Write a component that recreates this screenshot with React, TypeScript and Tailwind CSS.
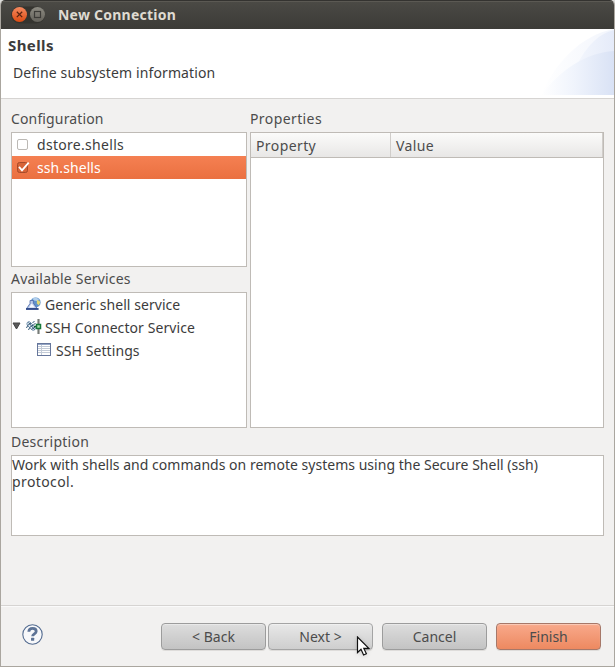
import type { ReactNode } from "react";

function WindowControls() {
  return (
    <svg width="34" height="18" viewBox="0 0 34 18" className="shrink-0">
      <defs>
        <linearGradient id="close" x1="0" y1="0" x2="0" y2="1">
          <stop offset="0" stopColor="#f58a60" />
          <stop offset="1" stopColor="#dd4b12" />
        </linearGradient>
        <linearGradient id="max" x1="0" y1="0" x2="0" y2="1">
          <stop offset="0" stopColor="#8d8b82" />
          <stop offset="1" stopColor="#64625b" />
        </linearGradient>
      </defs>
      <rect x="0" y="0.5" width="34" height="17" rx="8.5" fill="#35342f" />
      <circle cx="8.5" cy="8.5" r="7.5" fill="url(#close)" />
      <path d="M5.8 5.7l5.4 5.4M11.2 5.7l-5.4 5.4" stroke="#5c2410" strokeWidth="1.3" />
      <circle cx="26.5" cy="8.5" r="7.5" fill="url(#max)" />
      <rect x="23.5" y="5.5" width="6" height="6" fill="none" stroke="#3c3b37" strokeWidth="1.2" />
    </svg>
  );
}

function HeaderArt() {
  return (
    <svg width="76" height="66" viewBox="0 0 76 66" className="shrink-0">
      <defs>
        <linearGradient id="swoosh" x1="0" x2="1">
          <stop offset="0" stopColor="#ffffff" />
          <stop offset="0.45" stopColor="#f0f4fc" />
          <stop offset="1" stopColor="#d9e2f5" />
        </linearGradient>
        <linearGradient id="arc" x1="0" x2="1">
          <stop offset="0" stopColor="#ffffff" />
          <stop offset="1" stopColor="#f2f5fc" />
        </linearGradient>
        <linearGradient id="petal" x1="0" x2="1">
          <stop offset="0" stopColor="#f4f7fd" />
          <stop offset="1" stopColor="#e5ebf9" />
        </linearGradient>
      </defs>
      <path d="M3 66C16 36 42 6 76 0V66Z" fill="url(#arc)" />
      <path d="M36 42C46 20 59 5 76 1V50Z" fill="url(#petal)" />
      <path d="M3 66C22 42 46 24 76 22V66Z" fill="url(#swoosh)" />
    </svg>
  );
}

function ShellIcon() {
  return (
    <svg width="15" height="14" viewBox="0 0 15 14" className="shrink-0">
      <circle cx="9.6" cy="5.4" r="5" fill="#5f92cc" />
      <path d="M6.5 1.8C8 .4 11 .2 13 2.4L11 4l-3-.6z" fill="#b3d0ec" />
      <path d="M11 3l2.4.8.8 1.8-1.4 2.6-2-1.6z" fill="#e2d873" />
      <path d="M4 3.5h3.4v2.7l3.8 5.3H.6L4 6.6z" fill="#b7c8e8" stroke="#4a68a8" strokeWidth=".8" />
      <path d="M3 10.6L5.7 6.4l3.2 4.2z" fill="#f5f9ff" />
      <path d="M0 12h12.6" stroke="#2c4788" strokeWidth="1.8" />
    </svg>
  );
}

function ConnectorIcon() {
  return (
    <svg width="16" height="15" viewBox="0 0 16 15" className="shrink-0">
      <path d="M12.5 0v15" stroke="#b0b3b0" strokeWidth="3" />
      <path d="M12.5 0v15" stroke="#777b78" strokeWidth="1" />
      <path d="M1 4.5C1 2.7 3.5 2 4.7 3.7L9 8.5c1 1.5-.6 3.2-2.5 2.6L2 7C1.2 6.2 1 5.5 1 4.5z" fill="#edf4fa" stroke="#54789a" strokeWidth=".9" />
      <path d="M2.5 3.5l6 7M1.5 6.5L5 4M3.5 8.5L7.3 6M5.5 10.5L9 8M6.5 3.5l2-1M7.5 5.5l2-1M0 8.5l2-1M2 10.5l2-1" stroke="#315776" strokeWidth="1" />
      <path d="M8 7.5h3" stroke="#175f38" strokeWidth="1.5" />
      <rect x="10.5" y="5.5" width="4" height="4" fill="#a9e3b1" stroke="#177839" strokeWidth="1.5" />
    </svg>
  );
}

function TableIcon() {
  return (
    <svg width="14" height="13" viewBox="0 0 14 13" className="shrink-0">
      <rect x=".5" y=".5" width="13" height="12" fill="#fff" stroke="#66769b" />
      <path d="M1 1.5h12" stroke="#94a5c4" />
      <path d="M1 3.5h12M1 5.5h12M1 7.5h12M1 9.5h12M4.5 2v10" stroke="#c3cbd7" />
    </svg>
  );
}

function HelpIcon() {
  return (
    <svg width="21" height="21" viewBox="0 0 21 21">
      <circle cx="10.5" cy="10.5" r="9.7" fill="#f7f8fa" stroke="#536b90" strokeWidth="1.1" />
      <path d="M6.8 7.8C6.9 5.3 8.4 4.4 10.6 4.4c2.3 0 3.6 1.1 3.6 2.9 0 2.6-3.6 2.5-3.6 5" fill="none" stroke="#5d7396" strokeWidth="2.8" />
      <rect x="9" y="13.8" width="3.2" height="3" rx=".5" fill="#5d7396" />
    </svg>
  );
}

function Pointer() {
  return (
    <svg width="14" height="21" viewBox="0 0 14 21" className="absolute left-[88px] top-[13px] drop-shadow-sm">
      <path d="M1.5 1v15.5l3.5-3.3 2.6 5.8 2.8-1.2-2.6-5.4h5z" fill="#fff" stroke="#111" strokeWidth="1.2" />
    </svg>
  );
}

function Button({ children, primary = false, hover = false }: { children: ReactNode; primary?: boolean; hover?: boolean }) {
  const tone = primary
    ? "border-[#a67869] from-[#f8a98b] to-[#ed8960]"
    : hover
      ? "border-[#a4a4a4] from-[#e8e8e8] to-[#cecece]"
      : "border-[#9c9c9c] from-[#dddddd] to-[#c3c3c3]";
  return (
    <button className={`h-[27px] w-[105px] rounded-[4px] border bg-linear-to-b pt-px text-[#4c4c4c] shadow-[inset_0_1px_1px_#ffffff66,0_1px_0_#dedcda] ${tone}`}>
      {children}
    </button>
  );
}

export default function App() {
  return (
    <div className="h-[667px] w-[615px] bg-[#dededb] font-['Noto_Sans','Open_Sans',sans-serif] text-[14px] leading-[18px] text-[#3c3c3c]">
      <div className="flex h-full flex-col overflow-hidden rounded-t-[5px] border-x border-b border-[#aaa69f] bg-[#f2f1f0]">
        <header className="flex h-[29px] shrink-0 items-center border-t border-[#343330] bg-linear-to-b from-[#4b4a45] to-[#3c3b37] pl-[10px] shadow-[inset_0_1px_0_#5b5953]">
          <WindowControls />
          <h1 className="ml-[13px] text-[14px] font-bold tracking-[0.24px] text-[#dfdbd2]">New Connection</h1>
        </header>

        <section className="flex h-[70px] shrink-0 justify-between border-b border-[#d6d4d2] bg-white">
          <div className="pl-[7px] pt-[7px]">
            <h2 className="text-[15px] font-bold tracking-[0.4px]">Shells</h2>
            <p className="mt-[10px] pl-[5px] tracking-[0.12px]">Define subsystem information</p>
          </div>
          <HeaderArt />
        </section>

        <main className="flex h-[507px] shrink-0 flex-col border-b border-[#d6d4d2] pl-[10px] pr-[10px] pt-[11px] text-[#4c4c4c]">
          <div className="flex gap-[3px]">
            <div className="w-[236px]">
              <h3 className="h-[22px] tracking-[0.14px]">Configuration</h3>
              <div className="h-[135px] border border-[#bfbbb6] bg-white text-[#3c3c3c]">
                <div className="flex h-[23px] items-center pl-[5px]">
                  <span className="mr-[9px] size-[11px] rounded-[2px] border border-[#bcb9b5] bg-white" />
                  <span className="tracking-[0.3px]">dstore.shells</span>
                </div>
                <div className="flex h-[23px] items-center bg-linear-to-b from-[#f58052] to-[#ea7040] pl-[5px] text-white">
                  <svg width="13" height="12" viewBox="0 0 13 12" className="mr-[7px]">
                    <rect x=".5" y=".5" width="10" height="10" rx="2" fill="#d76337" stroke="#a64b2a" />
                    <path d="M2 4.9l3 3.4L11.7 .6" fill="none" stroke="#fff" strokeWidth="1.8" />
                  </svg>
                  <span className="tracking-[0.08px]">ssh.shells</span>
                </div>
              </div>
              <h3 className="h-[25px] pt-[3px] tracking-[0.2px]">Available Services</h3>
              <div className="h-[136px] border border-[#bfbbb6] bg-white text-[#3c3c3c]">
                <div className="flex h-[23px] items-center gap-[4px] pl-[14px]">
                  <span className="pb-[2px]"><ShellIcon /></span>
                  <span className="tracking-[0.05px]">Generic shell service</span>
                </div>
                <div className="flex h-[23px] items-center">
                  <svg width="9" height="8" viewBox="0 0 9 8" className="mb-[4px] mr-[5px]">
                    <path d="M1 1h7L4.5 7z" fill="#5a5a5a" stroke="#444" />
                  </svg>
                  <span className="pb-[2px]"><ConnectorIcon /></span>
                  <span className="ml-[3px] tracking-[0.08px]">SSH Connector Service</span>
                </div>
                <div className="flex h-[23px] items-center gap-[5px] pl-[25px]">
                  <span className="pb-[2px]"><TableIcon /></span>
                  <span className="tracking-[0.08px]">SSH Settings</span>
                </div>
              </div>
            </div>
            <div className="w-[354px]">
              <h3 className="h-[22px] tracking-[0.4px]">Properties</h3>
              <div className="h-[296px] border border-[#bfbbb6] bg-white">
                <div className="flex h-[25px] border-b border-[#bfbbb6] bg-linear-to-b from-[#fbfbfa] to-[#e8e7e6] leading-[25px]">
                  <span className="w-[140px] border-r border-[#d0cdca] pl-[5px] tracking-[0.4px]">Property</span>
                  <span className="flex-1 border-r border-[#d0cdca] pl-[5px] tracking-[0.4px]">Value</span>
                </div>
              </div>
            </div>
          </div>
          <h3 className="h-[27px] pt-[5px] tracking-[0.25px]">Description</h3>
          <p className="h-[81px] w-[593px] border border-[#bfbbb6] bg-white leading-[17px] tracking-[0.02px] text-[#3c3c3c]">
            Work with shells and commands on remote systems using the Secure Shell (ssh)
            <br />
            <span className="tracking-[0.4px]">protocol.</span>
          </p>
        </main>

        <footer className="flex flex-1 items-start justify-between border-t border-[#fafafa] pl-[21px] pr-[13px] pt-[16px]">
          <div className="pt-[1px]"><HelpIcon /></div>
          <div className="flex">
            <Button>&lt; Back</Button>
            <div className="relative ml-[2px]">
              <Button hover>Next &gt;</Button>
              <Pointer />
            </div>
            <div className="ml-[9px]"><Button>Cancel</Button></div>
            <div className="ml-[9px]"><Button primary>Finish</Button></div>
          </div>
        </footer>
      </div>
    </div>
  );
}
